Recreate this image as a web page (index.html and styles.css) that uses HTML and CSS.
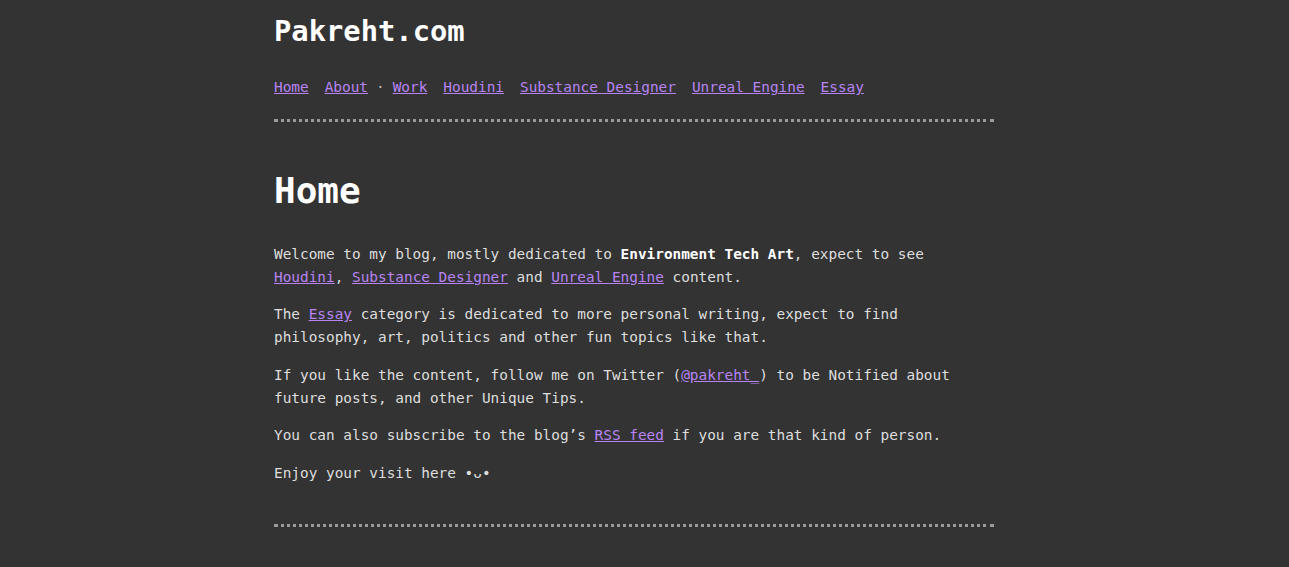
FILE: index.html
```html
<!DOCTYPE html>
<html lang="en">
<head>
<meta charset="utf-8">
<title>Pakreht.com</title>
<link rel="stylesheet" href="styles.css">
</head>
<body>
<div class="page">
  <header class="site-header">
    <h1 class="site-title">Pakreht.com</h1>
    <nav class="nav">
      <a href="#">Home</a>
      <a href="#">About</a>
      <span class="sep">·</span>
      <a href="#">Work</a>
      <a href="#">Houdini</a>
      <a href="#">Substance Designer</a>
      <a href="#">Unreal Engine</a>
      <a href="#">Essay</a>
    </nav>
  </header>
  <main class="content">
    <h2 class="page-title">Home</h2>
    <p>Welcome to my blog, mostly dedicated to <strong>Environment Tech Art</strong>, expect to see <a href="#">Houdini</a>, <a href="#">Substance Designer</a> and <a href="#">Unreal Engine</a> content.</p>
    <p>The <a href="#">Essay</a> category is dedicated to more personal writing, expect to find philosophy, art, politics and other fun topics like that.</p>
    <p>If you like the content, follow me on Twitter (<a href="#">@pakreht_</a>) to be Notified about future posts, and other Unique Tips.</p>
    <p>You can also subscribe to the blog’s <a href="#">RSS feed</a> if you are that kind of person.</p>
    <p>Enjoy your visit here •ᴗ•</p>
  </main>
  <footer class="site-footer"></footer>
</div>
</body>
</html>
```
FILE: styles.css
```css
html, body {
  margin: 0;
  padding: 0;
  background: #333333;
}
body {
  color: #dedede;
  font-family: "DejaVu Sans Mono", "Liberation Mono", monospace;
  font-size: 14.4px;
  line-height: 23px;
}
.page {
  max-width: 741px;
  margin: 0 auto;
  padding-right: 21px;
  box-sizing: border-box;
}
a {
  color: #b884f4;
}
.site-header {
  padding-top: 14px;
  padding-bottom: 20px;
  border-bottom: 3px dotted #9a9a9a;
}
.site-title {
  margin: 0 0 28px 0;
  font-size: 28.8px;
  line-height: 34px;
  font-weight: bold;
  color: #ffffff;
}
.nav {
  display: flex;
  flex-wrap: wrap;
  gap: 16px;
  height: 23px;
}
.nav .sep {
  margin: 0 -8px;
  color: #bdbdbd;
}
.content {
  padding-top: 47px;
  padding-bottom: 25px;
}
.page-title {
  margin: 0 0 31px 0;
  font-size: 36px;
  line-height: 43px;
  font-weight: bold;
  color: #ffffff;
}
.content p {
  margin: 0 0 14.4px 0;
}
.content strong {
  color: #ffffff;
}
.site-footer {
  border-top: 3px dotted #9a9a9a;
  height: 40px;
}
```
